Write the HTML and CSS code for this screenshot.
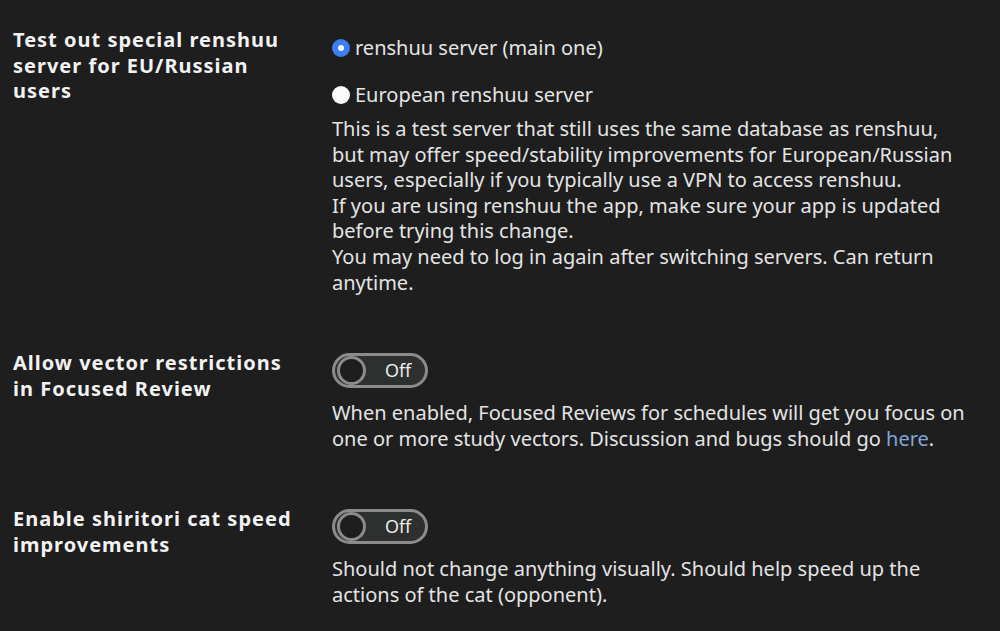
FILE: index.html
```html
<!DOCTYPE html>
<html lang="en">
<head>
<meta charset="UTF-8">
<meta name="viewport" content="width=device-width, initial-scale=1.0">
<title>Settings</title>
<link rel="stylesheet" href="styles.css">
</head>
<body>

<div class="settings">

    <div class="setting">
        <div class="label">Test out special renshuu server for EU/Russian users</div>
        <div class="control">
            <div class="options">
                <div class="option"><span class="radio checked"></span>renshuu server (main one)</div>
                <div class="option"><span class="radio"></span>European renshuu server</div>
            </div>
            <p class="desc">This is a test server that still uses the same database as renshuu, but may offer speed/stability improvements for European/Russian users, especially if you typically use a VPN to access renshuu.<br>If you are using renshuu the app, make sure your app is updated before trying this change.<br>You may need to log in again after switching servers. Can return anytime.</p>
        </div>
    </div>

    <div class="setting">
        <div class="label">Allow vector restrictions in Focused Review</div>
        <div class="control">
            <div class="toggle"><span class="knob"></span><span class="toggle-text">Off</span></div>
            <p class="desc">When enabled, Focused Reviews for schedules will get you focus on one or more study vectors. Discussion and bugs should go <a href="#">here</a>.</p>
        </div>
    </div>

    <div class="setting">
        <div class="label">Enable shiritori cat speed improvements</div>
        <div class="control">
            <div class="toggle"><span class="knob"></span><span class="toggle-text">Off</span></div>
            <p class="desc">Should not change anything visually. Should help speed up the actions of the cat (opponent).</p>
        </div>
    </div>

</div>

</body>
</html>
```

FILE: styles.css
```css
*{
    margin:0;
    padding:0;
    box-sizing:border-box;
}

body{
    background:#1e1e1e;
    color:#e4e4e4;
    font-family:"Noto Sans","Open Sans",sans-serif;
    font-size:20px;
    line-height:25.6px;
}

.settings{
    padding:27px 0 0 13px;
}

.setting{
    display:grid;
    grid-template-columns:319px 640px;
    margin-bottom:55px;
}

.setting:last-child{
    margin-bottom:0;
}

.label{
    width:282px;
    font-weight:bold;
    letter-spacing:1px;
    color:#f2f2f2;
}

.options{
    margin-top:8px;
}

.option{
    display:flex;
    align-items:center;
    height:26px;
    margin-bottom:21px;
}

.option:last-child{
    margin-bottom:8px;
}

.radio{
    width:18px;
    height:18px;
    border-radius:50%;
    background:#fafafa;
    margin-right:5px;
    position:relative;
}

.radio.checked{
    background:#3d7fee;
}

.radio.checked::after{
    content:"";
    position:absolute;
    left:6px;
    top:6px;
    width:6px;
    height:6px;
    border-radius:50%;
    background:white;
}

.toggle{
    display:flex;
    align-items:center;
    width:96px;
    height:35px;
    margin-top:3px;
    margin-bottom:12px;
    border:3px solid #8b8b8b;
    border-radius:18px;
    background:#2e302f;
    padding-left:2px;
}

.knob{
    width:29px;
    height:29px;
    border-radius:50%;
    border:3px solid #8b8b8b;
    background:#1e1e1e;
}

.toggle-text{
    margin-left:19px;
    font-family:"Open Sans",sans-serif;
    font-size:18px;
    color:#f2f2f2;
}

a{
    color:#7fa6dc;
    text-decoration:none;
}
```
